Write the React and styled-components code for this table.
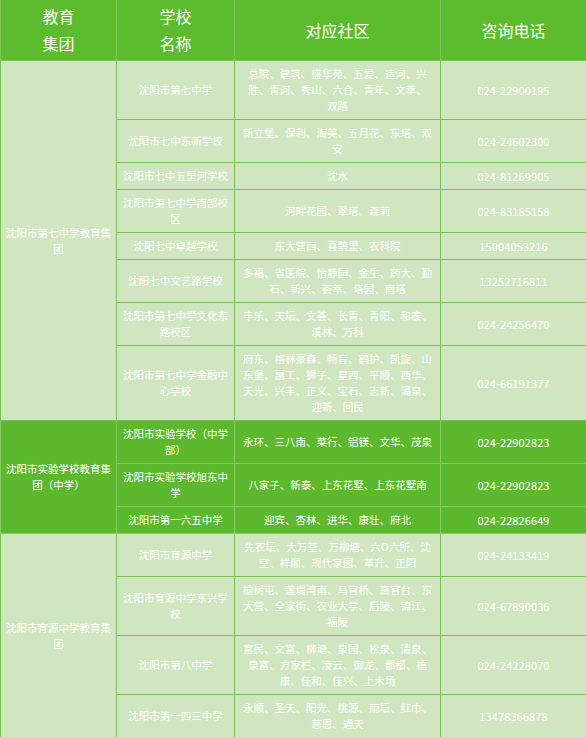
import React from "react";
import styled, { createGlobalStyle } from "styled-components";

const GlobalStyle = createGlobalStyle`
  html, body {
    margin: 0;
    padding: 0;
    background: #ffffff;
  }
  body {
    font-family: "Noto Sans CJK SC", "Microsoft YaHei", sans-serif;
  }
`;

const groups = [
  {
    name: ["沈阳市第七中学教育集", "团"],
    tone: "light",
    schools: [
      {
        school: ["沈阳市第七中学"],
        areas: ["总院、建筑、盛华苑、五爱、运河、兴", "胜、青河、秀山、六合、青年、文萃、", "双路"],
        phone: "024-22900195",
      },
      {
        school: ["沈阳市七中东新学校"],
        areas: ["新立堡、保利、海美、五月花、东塔、双", "安"],
        phone: "024-24602300",
      },
      { school: ["沈阳市七中五里河学校"], areas: ["沈水"], phone: "024-81269905" },
      {
        school: ["沈阳市第七中学南部校", "区"],
        areas: ["河畔花园、翠塔、森莉"],
        phone: "024-83185158",
      },
      {
        school: ["沈阳七中卓越学校"],
        areas: ["东大营西、喜鹊里、农科院"],
        phone: "15004053216",
      },
      {
        school: ["沈阳七中文艺路学校"],
        areas: ["多福、省医院、怡静园、金生、药大、勤", "石、新兴、荟萃、塔园、南塔"],
        phone: "13252716811",
      },
      {
        school: ["沈阳市第七中学文化东", "路校区"],
        areas: ["丰乐、天坛、文荟、长青、青阳、和泰、", "溪林、万科"],
        phone: "024-24256470",
      },
      {
        school: ["沈阳市第七中学金融中", "心学校"],
        areas: [
          "府东、格林豪森、畅音、鹤护、凯旋、山",
          "东堡、惠工、狮子、皇西、平顺、西华、",
          "天光、兴丰、正义、宝石、志新、涌泉、",
          "迎新、回民",
        ],
        phone: "024-66191377",
      },
    ],
  },
  {
    name: ["沈阳市实验学校教育集", "团（中学）"],
    tone: "dark",
    schools: [
      {
        school: ["沈阳市实验学校（中学", "部）"],
        areas: ["永环、三八南、菜行、铝镁、文华、茂泉"],
        phone: "024-22902823",
      },
      {
        school: ["沈阳市实验学校旭东中", "学"],
        areas: ["八家子、新泰、上东花墅、上东花墅南"],
        phone: "024-22902823",
      },
      {
        school: ["沈阳市第一六五中学"],
        areas: ["迎宾、杏林、进华、康壮、府北"],
        phone: "024-22826649",
      },
    ],
  },
  {
    name: ["沈阳市育源中学教育集", "团"],
    tone: "light",
    schools: [
      {
        school: ["沈阳市育源中学"],
        areas: ["先农坛、大万荃、万柳塘、六O六所、沈", "空、祥顺、现代家园、革升、正阳"],
        phone: "024-24133419",
      },
      {
        school: ["沈阳市育源中学东兴学", "校"],
        areas: ["榆树屯、莲堤湾南、马官桥、高官台、东", "大营、全家街、农业大学、后陵、锦江、", "福陵"],
        phone: "024-67890036",
      },
      {
        school: ["沈阳市第八中学"],
        areas: ["富民、文富、柳塘、泉园、松泉、清泉、", "泉富、方家栏、凌云、御龙、鄱都、福", "康、佳和、佳兴、上木场"],
        phone: "024-24228070",
      },
      {
        school: ["沈阳市第一四三中学"],
        areas: ["永顺、圣天、阳光、桃源、雨坛、红巾、", "慈恩、通天"],
        phone: "13478366878",
      },
    ],
  },
];

const Table = styled.table`
  width: 586px;
  table-layout: fixed;
  border-collapse: collapse;
  border-spacing: 0;
  color: #ffffff;
`;

const HeadCell = styled.th`
  background: #5dbb2e;
  border: 1px solid #7dc45a;
  border-top: none;
  padding: 3px 4px;
  font-size: 16px;
  line-height: 27px;
  font-weight: 400;
  text-align: center;
  vertical-align: middle;
`;

const Cell = styled.td`
  background: ${(p) => (p.$tone === "dark" ? "#5cb92d" : "#cfe6c0")};
  border: 1px solid ${(p) => (p.$tone === "dark" ? "#84cd63" : "#7bbf58")};
  padding: 5px 3px;
  font-size: 10.5px;
  line-height: 16px;
  text-align: center;
  vertical-align: middle;
  white-space: nowrap;
  overflow: hidden;
`;

const Phone = styled(Cell)`
  font-size: 11px;
  letter-spacing: 0.1px;
`;

const Lines = ({ lines }) =>
  lines.map((line, i) => (
    <React.Fragment key={i}>
      {i > 0 && <br />}
      {line}
    </React.Fragment>
  ));

export default function App() {
  return (
    <>
      <GlobalStyle />
      <Table>
        <colgroup>
          <col style={{ width: 116 }} />
          <col style={{ width: 118 }} />
          <col style={{ width: 206 }} />
          <col style={{ width: 146 }} />
        </colgroup>
        <thead>
          <tr>
            <HeadCell>
              教育
              <br />
              集团
            </HeadCell>
            <HeadCell>
              学校
              <br />
              名称
            </HeadCell>
            <HeadCell>对应社区</HeadCell>
            <HeadCell>咨询电话</HeadCell>
          </tr>
        </thead>
        <tbody>
          {groups.map((g, gi) =>
            g.schools.map((s, si) => (
              <tr key={`${gi}-${si}`}>
                {si === 0 && (
                  <Cell $tone={g.tone} rowSpan={g.schools.length}>
                    <Lines lines={g.name} />
                  </Cell>
                )}
                <Cell $tone={g.tone}>
                  <Lines lines={s.school} />
                </Cell>
                <Cell $tone={g.tone}>
                  <Lines lines={s.areas} />
                </Cell>
                <Phone $tone={g.tone}>{s.phone}</Phone>
              </tr>
            ))
          )}
        </tbody>
      </Table>
    </>
  );
}
